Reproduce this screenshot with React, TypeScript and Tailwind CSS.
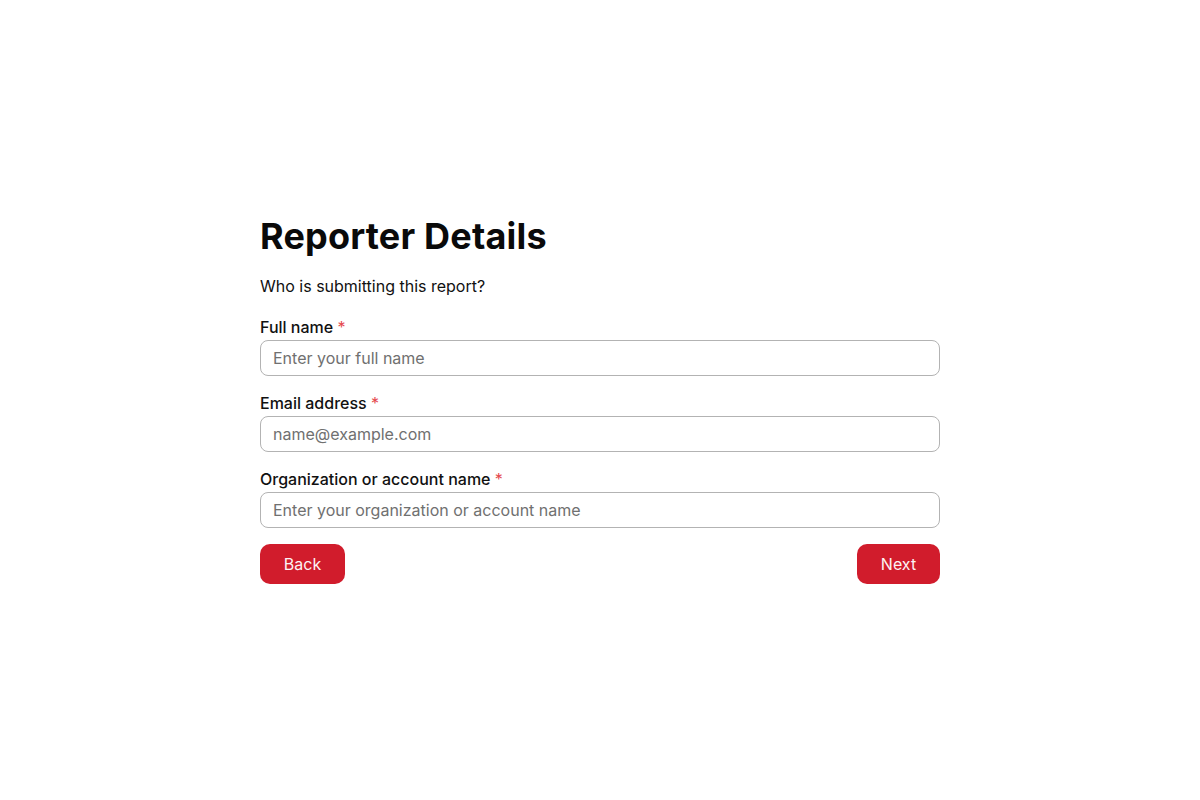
export default function App() {
  const fields = [
    { label: "Full name", placeholder: "Enter your full name", type: "text" },
    { label: "Email address", placeholder: "name@example.com", type: "email" },
    { label: "Organization or account name", placeholder: "Enter your organization or account name", type: "text" },
  ];
  return (
    <div
      className="min-h-[800px] w-full bg-white flex items-center justify-center text-[#111111]"
      style={{ fontFamily: "Inter, 'Noto Sans', sans-serif" }}
    >
      <div className="w-[680px] flex flex-col">
        <h1 className="text-[36px] leading-[40px] font-bold tracking-[0.2px] text-[#0a0a0a]">Reporter Details</h1>
        <p className="mt-[18px] text-[16px] leading-[24px]">Who is submitting this report?</p>
        <div className="mt-[17px] flex flex-col gap-[15px]">
          {fields.map((f) => (
            <div key={f.label} className="flex flex-col">
              <label className="text-[16px] leading-[24px] font-medium mb-[1px]">
                {f.label} <span className="text-[#e5484d] font-normal">*</span>
              </label>
              <input
                type={f.type}
                placeholder={f.placeholder}
                className="h-[36px] w-full rounded-lg border border-[#b3b3b3] px-[12px] text-[16px] placeholder:text-[#707070] outline-none"
              />
            </div>
          ))}
        </div>
        <div className="mt-[16px] flex justify-between">
          <button className="h-[40px] w-[85px] rounded-[10px] bg-[#d11c2c] text-[#fdf2f3] text-[16px] font-normal">Back</button>
          <button className="h-[40px] w-[83px] rounded-[10px] bg-[#d11c2c] text-[#fdf2f3] text-[16px] font-normal">Next</button>
        </div>
      </div>
    </div>
  );
}
